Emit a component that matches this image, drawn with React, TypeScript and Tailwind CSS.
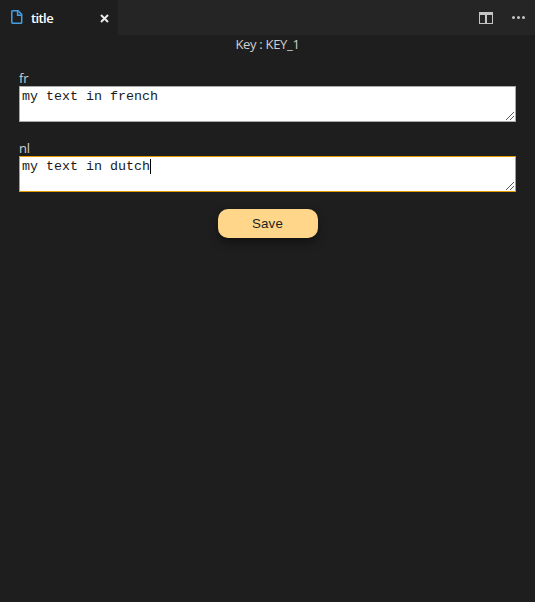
function ResizeGrip() {
  return (
    <svg className="absolute right-px bottom-px" width="8" height="8" viewBox="0 0 8 8" shapeRendering="crispEdges" fill="#5a5a5a">
      {[0, 1, 2, 3, 4, 5, 6, 7].map((i) => (
        <rect key={i} x={i} y={7 - i} width="1" height="1" />
      ))}
      {[0, 1, 2, 3].map((i) => (
        <rect key={i + 8} x={4 + i} y={7 - i} width="1" height="1" />
      ))}
    </svg>
  );
}

function Field({ label, value, focused = false }: { label: string; value: string; focused?: boolean }) {
  return (
    <div className="flex flex-col">
      <label className="h-4 text-[13px] leading-4 font-medium tracking-[-0.2px]">{label}</label>
      <div
        className={`relative flex h-9 items-start border bg-white pt-[2px] pl-[2px] font-['Liberation_Mono',monospace] text-[13.333px] leading-[15px] text-[#1a1a1a] ${focused ? 'border-[#e59a00]' : 'border-[#a9a9a9]'}`}
      >
        <span className="whitespace-pre">{value}</span>
        {focused && <span className="h-[15px] w-px bg-black" />}
        <ResizeGrip />
      </div>
    </div>
  );
}

export default function App() {
  return (
    <div className="flex h-[602px] w-[535px] flex-col overflow-hidden bg-[#1e1e1e] font-['Open_Sans','Noto_Sans',sans-serif] text-[#d0d0d0]">
      <header className="flex h-[35px] shrink-0 bg-[#252526]">
        <div className="flex w-[118px] items-center bg-[#1e1e1e] pr-[9px] pl-[11px]">
          <svg className="-mt-px" width="12" height="14" viewBox="0 0 12 14" fill="none" stroke="#459fe5" strokeWidth="1.5">
            <path d="M1.7 .8h5.4l3.6 3.6v8q0 .8-.8.8H1.7q-.9 0-.9-.9V1.7q0-.9.9-.9Z" />
            <path d="M6.6 1v4.2h4" />
          </svg>
          <span className="ml-2 flex-1 pt-px text-[13px] leading-4 font-semibold tracking-[-0.6px] text-white">title</span>
          <svg className="mt-px" width="9" height="9" viewBox="0 0 9 9" stroke="#e8e8e8" strokeWidth="2">
            <path d="m1 1 7 7M8 1 1 8" />
          </svg>
        </div>
        <div className="flex flex-1 items-center justify-end pr-[10px]">
          <svg width="14" height="12" viewBox="0 0 14 12" fill="#c5c5c5" shapeRendering="crispEdges">
            <path fillRule="evenodd" d="M0 0h14v12H0ZM1 3v8h5V3Zm7 0v8h5V3Z" />
          </svg>
          <svg className="ml-[19px]" width="13" height="3" viewBox="0 0 13 3" fill="#c5c5c5">
            <circle cx="1.5" cy="1.5" r="1.5" />
            <circle cx="6.5" cy="1.5" r="1.5" />
            <circle cx="11.5" cy="1.5" r="1.5" />
          </svg>
        </div>
      </header>
      <main className="flex flex-col px-[19px]">
        <h1 className="h-[35px] text-center text-[13px] leading-[19px] font-medium tracking-[-0.3px]">Key : KEY_1</h1>
        <div className="flex flex-col gap-[18px]">
          <Field label="fr" value="my text in french" />
          <Field label="nl" value="my text in dutch" focused />
        </div>
        <button className="mt-[17px] h-[29px] w-[100px] self-center rounded-[10px] bg-[#ffd68a] font-['Liberation_Sans',sans-serif] text-[13.333px] leading-4 tracking-[0.2px] text-[#1e1e1e] shadow-[0_5px_10px_rgba(0,0,0,0.4)]">
          Save
        </button>
      </main>
    </div>
  );
}
